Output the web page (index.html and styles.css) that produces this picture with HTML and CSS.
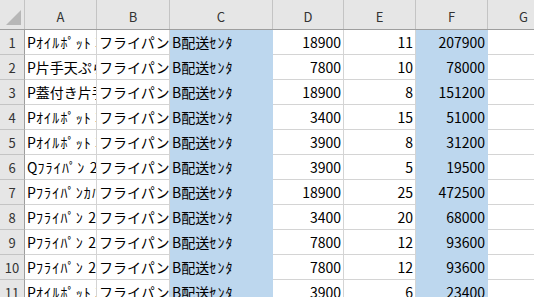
FILE: index.html
```html
<!DOCTYPE html>
<html lang="ja">
<head>
<meta charset="utf-8">
<link rel="stylesheet" href="styles.css">
</head>
<body>
<div class="sheet">
  <div class="row head">
    <div class="corner"><svg width="16" height="16" viewBox="0 0 16 16"><polygon points="15,0 15,15 0,15" fill="#b7b7b7"/></svg></div>
    <div class="ch">A</div><div class="ch">B</div><div class="ch">C</div><div class="ch">D</div><div class="ch">E</div><div class="ch">F</div><div class="ch">G</div>
  </div>
  <div class="row"><div class="rh">1</div><div class="c">P<span class="hk">ｵｲﾙﾎﾟｯﾄ</span> 3L</div><div class="c">フライパン・鍋</div><div class="c sel">B配送<span class="hk">ｾﾝﾀ</span></div><div class="c num">18900</div><div class="c num">11</div><div class="c num sel">207900</div><div class="c"></div></div>
  <div class="row"><div class="rh">2</div><div class="c">P片手天ぷら鍋</div><div class="c">フライパン・鍋</div><div class="c sel">B配送<span class="hk">ｾﾝﾀ</span></div><div class="c num">7800</div><div class="c num">10</div><div class="c num sel">78000</div><div class="c"></div></div>
  <div class="row"><div class="rh">3</div><div class="c">P蓋付き片手鍋</div><div class="c">フライパン・鍋</div><div class="c sel">B配送<span class="hk">ｾﾝﾀ</span></div><div class="c num">18900</div><div class="c num">8</div><div class="c num sel">151200</div><div class="c"></div></div>
  <div class="row"><div class="rh">4</div><div class="c">P<span class="hk">ｵｲﾙﾎﾟｯﾄ</span> 3L</div><div class="c">フライパン・鍋</div><div class="c sel">B配送<span class="hk">ｾﾝﾀ</span></div><div class="c num">3400</div><div class="c num">15</div><div class="c num sel">51000</div><div class="c"></div></div>
  <div class="row"><div class="rh">5</div><div class="c">P<span class="hk">ｵｲﾙﾎﾟｯﾄ</span> 3L</div><div class="c">フライパン・鍋</div><div class="c sel">B配送<span class="hk">ｾﾝﾀ</span></div><div class="c num">3900</div><div class="c num">8</div><div class="c num sel">31200</div><div class="c"></div></div>
  <div class="row"><div class="rh">6</div><div class="c">Q<span class="hk">ﾌﾗｲﾊﾟﾝ </span>20cm</div><div class="c">フライパン・鍋</div><div class="c sel">B配送<span class="hk">ｾﾝﾀ</span></div><div class="c num">3900</div><div class="c num">5</div><div class="c num sel">19500</div><div class="c"></div></div>
  <div class="row"><div class="rh">7</div><div class="c">P<span class="hk">ﾌﾗｲﾊﾟﾝｶﾊﾞｰ</span></div><div class="c">フライパン・鍋</div><div class="c sel">B配送<span class="hk">ｾﾝﾀ</span></div><div class="c num">18900</div><div class="c num">25</div><div class="c num sel">472500</div><div class="c"></div></div>
  <div class="row"><div class="rh">8</div><div class="c">P<span class="hk">ﾌﾗｲﾊﾟﾝ </span>24cm</div><div class="c">フライパン・鍋</div><div class="c sel">B配送<span class="hk">ｾﾝﾀ</span></div><div class="c num">3400</div><div class="c num">20</div><div class="c num sel">68000</div><div class="c"></div></div>
  <div class="row"><div class="rh">9</div><div class="c">P<span class="hk">ﾌﾗｲﾊﾟﾝ </span>26cm</div><div class="c">フライパン・鍋</div><div class="c sel">B配送<span class="hk">ｾﾝﾀ</span></div><div class="c num">7800</div><div class="c num">12</div><div class="c num sel">93600</div><div class="c"></div></div>
  <div class="row"><div class="rh">10</div><div class="c">P<span class="hk">ﾌﾗｲﾊﾟﾝ </span>26cm</div><div class="c">フライパン・鍋</div><div class="c sel">B配送<span class="hk">ｾﾝﾀ</span></div><div class="c num">7800</div><div class="c num">12</div><div class="c num sel">93600</div><div class="c"></div></div>
  <div class="row"><div class="rh">11</div><div class="c">P<span class="hk">ｵｲﾙﾎﾟｯﾄ</span> 3L</div><div class="c">フライパン・鍋</div><div class="c sel">B配送<span class="hk">ｾﾝﾀ</span></div><div class="c num">3900</div><div class="c num">6</div><div class="c num sel">23400</div><div class="c"></div></div>
</div>
</body>
</html>
```

FILE: styles.css
```css
* { box-sizing: border-box; }
html, body { margin: 0; padding: 0; background: #fff; }
body {
  font-family: "Noto Sans CJK JP", "Noto Sans", sans-serif;
  color: #000;
  overflow: hidden;
}
.sheet { width: 560px; }
.row {
  display: grid;
  grid-template-columns: 25px 72px 73px 103px 71px 72px 72px 72px;
  height: 25px;
}
.row.head { height: 30px; background: #e6e6e6; border-bottom: 1px solid #9e9e9e; }
.corner {
  border-right: 1px solid #c4c4c4;
  display: flex;
  align-items: flex-end;
  justify-content: flex-end;
  padding: 0 2px 3px 0;
}
.ch {
  border-right: 1px solid #c4c4c4;
  font-size: 13px;
  color: #333;
  display: flex;
  align-items: center;
  justify-content: center;
  padding-top: 4px;
}
.rh {
  background: #e6e6e6;
  border-right: 1px solid #9e9e9e;
  border-bottom: 1px solid #c4c4c4;
  font-size: 13px;
  color: #333;
  display: flex;
  align-items: center;
  justify-content: center;
}
.c {
  border-right: 1px solid #d4d4d4;
  border-bottom: 1px solid #d4d4d4;
  font-size: 14px;
  line-height: 24px;
  white-space: nowrap;
  overflow: hidden;
  padding: 0 2px;
}
.hk { letter-spacing: 1.2px; }
.num { text-align: right; padding-right: 2px; }
.sel { background: #bdd7ee; border-color: #bdd7ee; }
```
